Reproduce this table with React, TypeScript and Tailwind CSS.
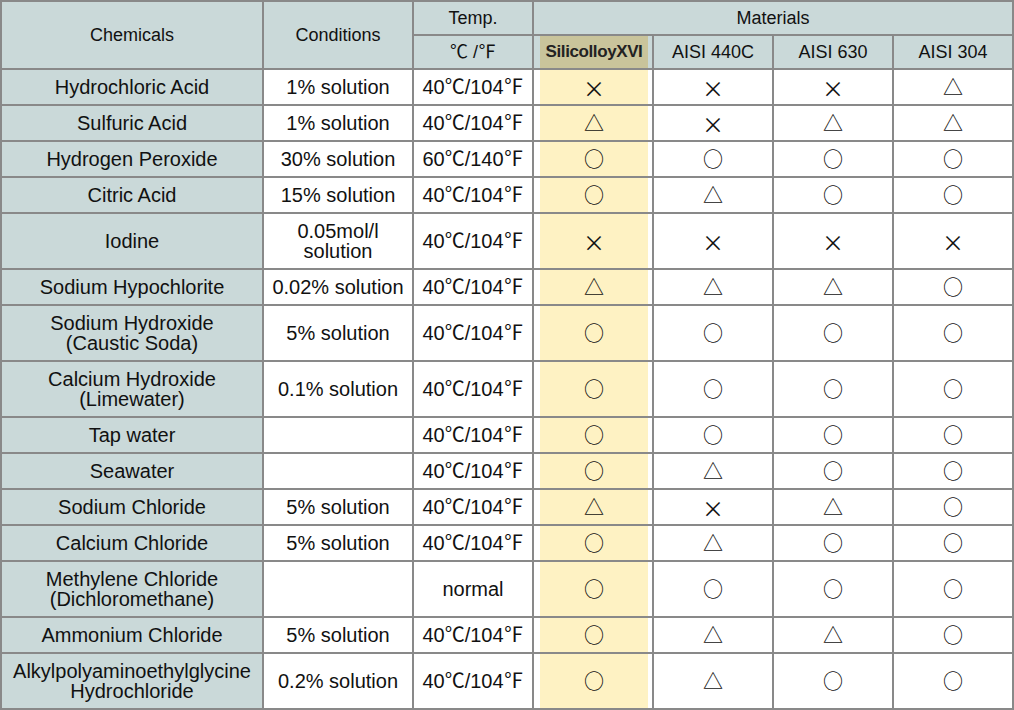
import React from 'react';

type Mark = 'x' | 't' | 'o';

const glyph: Record<Mark, string> = { x: '×', t: '△', o: '○' };

const rows: { name: string[]; cond: string[]; temp: string; marks: Mark[] }[] = [
  { name: ['Hydrochloric Acid'], cond: ['1% solution'], temp: '40℃/104℉', marks: ['x', 'x', 'x', 't'] },
  { name: ['Sulfuric Acid'], cond: ['1% solution'], temp: '40℃/104℉', marks: ['t', 'x', 't', 't'] },
  { name: ['Hydrogen Peroxide'], cond: ['30% solution'], temp: '60℃/140℉', marks: ['o', 'o', 'o', 'o'] },
  { name: ['Citric Acid'], cond: ['15% solution'], temp: '40℃/104℉', marks: ['o', 't', 'o', 'o'] },
  { name: ['Iodine'], cond: ['0.05mol/l', 'solution'], temp: '40℃/104℉', marks: ['x', 'x', 'x', 'x'] },
  { name: ['Sodium Hypochlorite'], cond: ['0.02% solution'], temp: '40℃/104℉', marks: ['t', 't', 't', 'o'] },
  { name: ['Sodium Hydroxide', '(Caustic Soda)'], cond: ['5% solution'], temp: '40℃/104℉', marks: ['o', 'o', 'o', 'o'] },
  { name: ['Calcium Hydroxide', '(Limewater)'], cond: ['0.1% solution'], temp: '40℃/104℉', marks: ['o', 'o', 'o', 'o'] },
  { name: ['Tap water'], cond: [], temp: '40℃/104℉', marks: ['o', 'o', 'o', 'o'] },
  { name: ['Seawater'], cond: [], temp: '40℃/104℉', marks: ['o', 't', 'o', 'o'] },
  { name: ['Sodium Chloride'], cond: ['5% solution'], temp: '40℃/104℉', marks: ['t', 'x', 't', 'o'] },
  { name: ['Calcium Chloride'], cond: ['5% solution'], temp: '40℃/104℉', marks: ['o', 't', 'o', 'o'] },
  { name: ['Methylene Chloride', '(Dichloromethane)'], cond: [], temp: 'normal', marks: ['o', 'o', 'o', 'o'] },
  { name: ['Ammonium Chloride'], cond: ['5% solution'], temp: '40℃/104℉', marks: ['o', 't', 't', 'o'] },
  { name: ['Alkylpolyaminoethylglycine', 'Hydrochloride'], cond: ['0.2% solution'], temp: '40℃/104℉', marks: ['o', 't', 'o', 'o'] },
];

const font = { fontFamily: '"Liberation Sans", "Noto Sans CJK JP", sans-serif' };

function Lines({ lines }: { lines: string[] }) {
  return (
    <div className="text-center leading-[20px]">
      {lines.map((l) => (
        <div key={l}>{l}</div>
      ))}
    </div>
  );
}

function MarkCell({ mark }: { mark: Mark }) {
  return (
    <span
      className={mark === 'x' ? 'text-[22px]' : 'text-[20px] font-medium'}
      style={{ fontFamily: '"Noto Sans CJK JP", sans-serif' }}
    >
      {glyph[mark]}
    </span>
  );
}

export default function App() {
  return (
    <div className="w-[1014px] h-[710px] bg-white text-[#111]" style={font}>
      <div className="grid grid-cols-[260px_148px_118px_118px_118px_118px_118px] grid-rows-[32px_32px_34px_34px_34px_34px_54px_34px_54px_54px_34px_34px_34px_34px_54px_34px_54px] gap-[2px] p-[2px] bg-[#898989]">
        {/* header */}
        <div className="row-span-2 bg-[#cad9d9] flex items-center justify-center text-[18px]">Chemicals</div>
        <div className="row-span-2 bg-[#cad9d9] flex items-center justify-center text-[18px]">Conditions</div>
        <div className="bg-[#cad9d9] flex items-center justify-center text-[18px]">Temp.</div>
        <div className="col-span-4 bg-[#cad9d9] flex items-center justify-center text-[18px]">Materials</div>
        <div className="bg-[#cad9d9] flex items-center justify-center text-[18px]">℃ /℉</div>
        <div className="bg-[#cad9d9] pl-[6px] pr-[4px]">
          <div className="h-full bg-[#c9c49b] flex items-center justify-center text-[17px] font-bold tracking-[-0.4px] text-[#222]">
            SilicolloyXVI
          </div>
        </div>
        <div className="bg-[#cad9d9] flex items-center justify-center text-[18px]">AISI 440C</div>
        <div className="bg-[#cad9d9] flex items-center justify-center text-[18px]">AISI 630</div>
        <div className="bg-[#cad9d9] flex items-center justify-center text-[18px]">AISI 304</div>

        {/* body */}
        {rows.map((r) => (
          <React.Fragment key={r.name.join(' ')}>
            <div className="bg-[#cad9d9] flex items-center justify-center text-[20px]">
              <Lines lines={r.name} />
            </div>
            <div className="bg-white flex items-center justify-center text-[20px]">
              <Lines lines={r.cond} />
            </div>
            <div className="bg-white flex items-center justify-center text-[20px]">{r.temp}</div>
            <div className="bg-white pl-[6px] pr-[4px]">
              <div className="h-full bg-[#fef2c3] flex items-center justify-center">
                <MarkCell mark={r.marks[0]} />
              </div>
            </div>
            {r.marks.slice(1).map((m, i) => (
              <div key={i} className="bg-white flex items-center justify-center">
                <MarkCell mark={m} />
              </div>
            ))}
          </React.Fragment>
        ))}
      </div>
    </div>
  );
}
